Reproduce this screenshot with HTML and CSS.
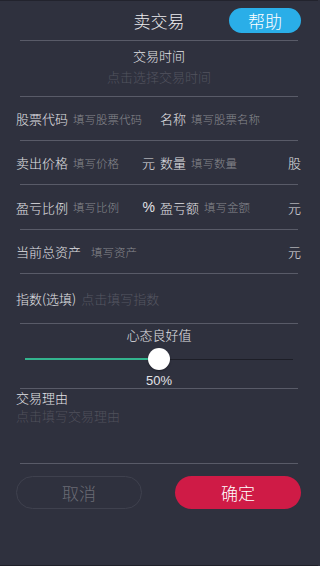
FILE: index.html
```html
<!DOCTYPE html>
<html lang="zh">
<head>
<meta charset="utf-8">
<title>卖交易</title>
<link rel="stylesheet" href="styles.css">
</head>
<body>
<div class="screen">
  <header class="header">
    <span></span>
    <h1 class="title">卖交易</h1>
    <button class="help">帮助</button>
  </header>
  <div class="rule"></div>
  <section class="time">
    <div class="time-label">交易时间</div>
    <div class="time-ph">点击选择交易时间</div>
  </section>
  <div class="rule"></div>
  <div class="row r43">
    <div class="half left">
      <span class="label">股票代码</span><span class="ph">填写股票代码</span>
    </div>
    <div class="half right">
      <span class="label">名称</span><span class="ph">填写股票名称</span>
    </div>
  </div>
  <div class="rule"></div>
  <div class="row r43">
    <div class="half left">
      <span class="label">卖出价格</span><span class="ph">填写价格</span><span class="unit">元</span>
    </div>
    <div class="half right">
      <span class="label">数量</span><span class="ph">填写数量</span><span class="unit">股</span>
    </div>
  </div>
  <div class="rule"></div>
  <div class="row r44">
    <div class="half left">
      <span class="label">盈亏比例</span><span class="ph">填写比例</span><span class="unit pct">%</span>
    </div>
    <div class="half right">
      <span class="label">盈亏额</span><span class="ph">填写金额</span><span class="unit">元</span>
    </div>
  </div>
  <div class="rule"></div>
  <div class="row r43">
    <div class="full">
      <span class="label">当前总资产</span><span class="ph wide">填写资产</span><span class="unit">元</span>
    </div>
  </div>
  <div class="rule"></div>
  <div class="row r49">
    <div class="full">
      <span class="label">指数(选填)</span><span class="ph dim">点击填写指数</span>
    </div>
  </div>
  <div class="rule"></div>
  <section class="mood">
    <div class="mood-title">心态良好值</div>
    <div class="slider">
      <div class="track">
        <div class="fill" style="width:50%"></div>
        <div class="thumb" style="left:50%"></div>
      </div>
    </div>
    <div class="mood-val">50%</div>
  </section>
  <div class="rule"></div>
  <section class="reason">
    <div class="reason-label">交易理由</div>
    <div class="reason-ph">点击填写交易理由</div>
  </section>
  <div class="rule"></div>
  <div class="actions">
    <button class="btn cancel">取消</button>
    <button class="btn ok">确定</button>
  </div>
</div>
</body>
</html>
```
FILE: styles.css
```css
* { box-sizing: border-box; }
html, body { margin: 0; padding: 0; }
body {
  background: #2f313e;
  font-family: "Noto Sans CJK SC", "Noto Sans", sans-serif;
  font-weight: 300;
  color: #e2e2e6;
}
.screen {
  width: 318px;
  height: 566px;
  display: flex;
  flex-direction: column;
  border-top: 1px solid #22232d;
  border-bottom: 1px solid #1f2029;
}
.header {
  height: 39px;
  display: grid;
  grid-template-columns: 1fr auto 1fr;
  align-items: center;
}
.title {
  margin: 0;
  font-size: 17px;
  font-weight: 300;
  color: #ececef;
  line-height: 20px;
}
.help {
  justify-self: end;
  margin-right: 17px;
  margin-top: -1px;
  width: 72px;
  height: 25px;
  border: none;
  border-radius: 13px;
  background: #2aaee8;
  color: #ffffff;
  font-family: inherit;
  font-weight: 300;
  font-size: 17px;
  line-height: 25px;
  padding: 0;
}
.rule {
  height: 1px;
  margin: 0 20px;
  background: #595b68;
  flex: none;
}
.time {
  height: 55px;
  padding-top: 5px;
  text-align: center;
}
.time-label {
  font-size: 13px;
  line-height: 20px;
  color: #e2e2e6;
}
.time-ph {
  margin-top: 1px;
  font-size: 13px;
  line-height: 20px;
  color: #52535e;
}
.row {
  display: flex;
  align-items: center;
  padding: 0 17px 0 16px;
}
.r43 { height: 43px; }
.r44 { height: 44px; }
.r49 { height: 49px; }
.half {
  display: flex;
  align-items: center;
}
.left { width: 144px; padding-right: 5px; }
.right { flex: 1; }
.full { flex: 1; display: flex; align-items: center; }
.label {
  font-size: 13px;
  color: #e2e2e6;
  white-space: nowrap;
}
.ph {
  margin-left: 5px;
  font-size: 11.5px;
  color: #88898f;
  white-space: nowrap;
}
.ph.wide { margin-left: 10px; }
.ph.dim { font-size: 13px; color: #565762; }
.unit {
  margin-left: auto;
  font-size: 13px;
  color: #e2e2e6;
}
.unit.pct { font-family: "Liberation Sans", sans-serif; font-size: 14px; font-weight: 400; }
.mood {
  height: 64px;
  padding-top: 1px;
  text-align: center;
}
.mood-title {
  font-size: 13px;
  line-height: 20px;
  color: #e2e2e6;
}
.slider {
  height: 28px;
  padding: 0 25px;
  display: flex;
  align-items: center;
}
.track {
  position: relative;
  flex: 1;
  height: 1px;
  background: #1d1e27;
}
.fill {
  height: 2px;
  margin-top: -0.5px;
  background: #33b48e;
}
.thumb {
  position: absolute;
  top: 0;
  width: 22px;
  height: 22px;
  margin: -11px 0 0 -11px;
  border-radius: 50%;
  background: #ffffff;
  box-shadow: 0 1px 2px rgba(0,0,0,0.35);
}
.mood-val {
  font-family: "Liberation Sans", sans-serif;
  font-weight: 400;
  font-size: 13px;
  line-height: 15px;
  color: #e2e2e6;
}
.reason {
  height: 74px;
  padding-left: 16px;
}
.reason-label {
  font-size: 13px;
  line-height: 17px;
  color: #e2e2e6;
}
.reason-ph {
  font-size: 13px;
  line-height: 20px;
  color: #4f505b;
}
.actions {
  display: flex;
  justify-content: space-between;
  padding: 0 17px 0 16px;
  margin-top: 12px;
}
.btn {
  width: 126px;
  height: 33px;
  border-radius: 17px;
  font-family: inherit;
  font-weight: 300;
  font-size: 17px;
  padding: 0;
  line-height: 31px;
}
.cancel {
  background: transparent;
  border: 1px solid #3f414e;
  color: #6b6c75;
}
.ok {
  background: #cf1b46;
  border: none;
  color: #ffffff;
  line-height: 33px;
}
```
